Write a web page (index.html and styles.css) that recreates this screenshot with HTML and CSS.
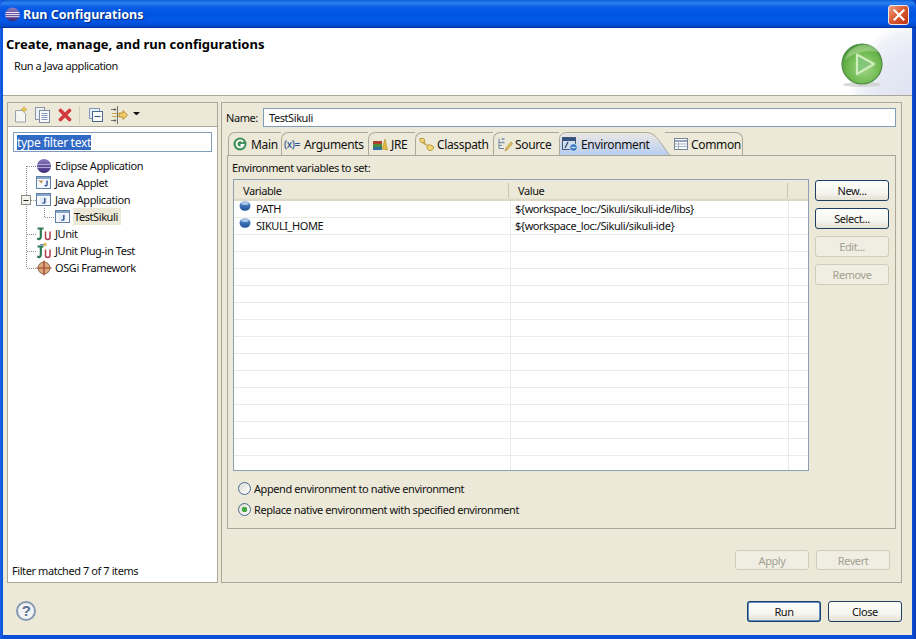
FILE: index.html
```html
<!DOCTYPE html>
<html lang="en">
<head>
<meta charset="utf-8">
<title>Run Configurations</title>
<link rel="stylesheet" href="styles.css">
</head>
<body>
<svg class="defs" width="0" height="0" aria-hidden="true">
  <defs>
    <linearGradient id="eclipse" x1="0" y1="0" x2="0" y2="1"><stop offset="0" stop-color="#8d7cc0"/><stop offset="1" stop-color="#3c2a78"/></linearGradient>
    <radialGradient id="ball" cx=".55" cy=".6" r=".7"><stop offset="0" stop-color="#a4d88c"/><stop offset=".6" stop-color="#6cb84c"/><stop offset="1" stop-color="#3f8a34"/></radialGradient>
    <linearGradient id="blueball" x1="0" y1="0" x2="0" y2="1"><stop offset="0" stop-color="#8fb2e0"/><stop offset=".45" stop-color="#3f74b8"/><stop offset="1" stop-color="#1e4f98"/></linearGradient>
    <linearGradient id="envtab" x1="0" y1="0" x2="0" y2="1"><stop offset="0" stop-color="#ece9e4"/><stop offset="1" stop-color="#b6ccf0"/></linearGradient>
    <symbol id="jfile" viewBox="0 0 16 16">
      <rect x=".5" y="1.500" width="14" height="12" fill="#f4f7fb" stroke="#5f7fa4"/>
      <rect x="1" y="2" width="13" height="2" fill="#86a5c9"/>
      <rect x="4" y="5" width="7" height="7" fill="#e2ebf6"/>
      <path d="M8.800 6v4.200c0 1-1.600 1.200-2.400.6" fill="none" stroke="#2a4f94" stroke-width="1.400"/>
    </symbol>
    <symbol id="ju" viewBox="0 0 16 14">
      <path d="M1.500 1.500h6M4.800 1.500v8.500c0 2-1.800 2.500-3.600 1.600" fill="none" stroke="#2f7a54" stroke-width="2.200"/>
      <path d="M9.500 4.500v6c0 2.500 4.500 2.500 4.500 0v-6" fill="none" stroke="#b04050" stroke-width="1.500"/>
    </symbol>
    <symbol id="var" viewBox="0 0 12 10">
      <ellipse cx="6" cy="5" rx="5.500" ry="4.800" fill="url(#blueball)"/>
      <ellipse cx="6" cy="2.600" rx="3.400" ry="1.500" fill="#c5d8f0" opacity=".75"/>
    </symbol>
  </defs>
</svg>

<div class="window">
  <header class="titlebar">
    <svg class="title-icon" width="15" height="15" viewBox="0 0 15 15">
      <circle cx="7.500" cy="7.500" r="7" fill="url(#eclipse)"/>
      <path d="M.5 5.500h14M.2 7.600h14.600M.5 9.700h14" stroke="#e8e0f4" stroke-width="1"/>
    </svg>
    <span class="title-text">Run Configurations</span>
    <button class="close-x" aria-label="Close">
      <svg width="12" height="12" viewBox="0 0 12 12"><path d="M1.500 1.500l9 9M10.500 1.500l-9 9" stroke="#fff" stroke-width="2.200" stroke-linecap="square"/></svg>
    </button>
  </header>

  <div class="client">
    <section class="banner">
      <div class="banner-text">
        <h1>Create, manage, and run configurations</h1>
        <p>Run a Java application</p>
      </div>
      <svg class="banner-icon" width="44" height="46" viewBox="0 0 44 46">
        <ellipse cx="22" cy="42.500" rx="19" ry="2.500" fill="#c8ccc4" opacity=".7"/>
        <circle cx="22" cy="22" r="20" fill="url(#ball)" stroke="#4f8a48" stroke-width="1.200"/>
        <path d="M5 18C8 7 17 3 25 3c7 0 11 3 13 7C28 8 14 10 5 18z" fill="#d4eec4" opacity=".4"/>
        <path d="M17 12.500l17 9.500-17 10z" fill="#7cc27a" fill-opacity=".7" stroke="#cfeebc" stroke-width="2.200" stroke-linejoin="round"/>
      </svg>
    </section>

    <main class="workspace">
      <aside class="left-panel">
        <div class="left-toolbar">
          <svg class="tb-new" width="14" height="17" viewBox="0 0 14 17">
            <path d="M1.500 4.500h7l3 3v8.500h-10z" fill="#f6f6f2" stroke="#9aa3ae"/>
            <path d="M10 .5l.9 2.100 2.100.9-2.100.9-.9 2.100-.9-2.100-2.100-.9 2.100-.9z" fill="#f2c94e" stroke="#b9902c" stroke-width=".5"/>
          </svg>
          <svg class="tb-dup" width="15" height="16" viewBox="0 0 15 16">
            <rect x=".5" y=".5" width="9" height="12" fill="#eef1f6" stroke="#8a96a8"/>
            <rect x="4.500" y="3.500" width="10" height="12" fill="#f8f9fb" stroke="#7d8ba0"/>
            <path d="M6.500 6.500h6M6.500 8.500h6M6.500 10.500h6M6.500 12.500h6" stroke="#8497b4"/>
          </svg>
          <svg class="tb-del" width="14" height="14" viewBox="0 0 14 14">
            <path d="M2.500 2.500l9 9M11.500 2.500l-9 9" stroke="#d33a3f" stroke-width="3.600" stroke-linecap="round"/>
          </svg>
          <span class="tb-sep"></span>
          <svg class="tb-collapse" width="14" height="14" viewBox="0 0 14 14">
            <rect x=".5" y=".5" width="10" height="10" fill="#e8eef6" stroke="#7f97b8"/>
            <rect x="3.500" y="3.500" width="10" height="10" fill="#f7f9fc" stroke="#49678f"/>
            <path d="M5.500 8.500h6" stroke="#2f4f7c"/>
          </svg>
          <svg class="tb-filter" width="17" height="18" viewBox="0 0 17 18">
            <path d="M0 3.500h5M0 14.500h5M6.500 0v18" stroke="#6f6f6f"/>
            <path d="M3.500 2l2 1.500-2 1.500zM3.500 13l2 1.500-2 1.500z" fill="#555"/>
            <path d="M8 7h4V4.500L16.500 9 12 13.500V11H8z" fill="#f3cc6a" stroke="#b8902e"/>
            <path d="M1 7.500h5M1 10.500h5" stroke="#c9a54a"/>
          </svg>
          <span class="tb-drop"></span>
        </div>
        <div class="filter-wrap">
          <div class="filter-input"><span class="filter-sel">type filter text</span></div>
        </div>
        <div class="tree">
          <svg class="tree-lines" width="60" height="120" viewBox="0 0 60 120">
            <path d="M18.500 6v102M19 6.500h10M23 40.500h6M19 74.500h10M19 91.500h10M19 108.500h10M36.500 48v9M37 57.500h11" fill="none" stroke="#8f8f8f" stroke-dasharray="1 1"/>
            <rect x="13.500" y="35.500" width="9" height="9" fill="#f3f2ec" stroke="#8a8a80"/>
            <path d="M15.500 40.500h5" stroke="#222"/>
          </svg>
          <div class="node">
            <svg class="node-icon" width="16" height="16" viewBox="0 0 16 16"><circle cx="8" cy="8" r="7" fill="url(#eclipse)"/><path d="M1 6.500h14M1 9.500h14" stroke="#b4a8d8"/></svg>
            <span>Eclipse Application</span>
          </div>
          <div class="node">
            <svg class="node-icon" width="16" height="16" viewBox="0 0 16 16"><rect x=".5" y="1.500" width="14" height="12" fill="#f4f7fb" stroke="#5f7fa4"/><rect x="1" y="2" width="13" height="2" fill="#86a5c9"/><path d="M2 5c2 1 3 1 5 0l-1.500 3.500L4 7z" fill="#b78a3c"/><path d="M11 5.500v4.300c0 1-1.600 1.200-2.400.6" fill="none" stroke="#2a4f94" stroke-width="1.400"/></svg>
            <span>Java Applet</span>
          </div>
          <div class="node">
            <svg class="node-icon" width="16" height="16"><use href="#jfile"/></svg>
            <span>Java Application</span>
          </div>
          <div class="node node-child">
            <svg class="node-icon" width="16" height="16"><use href="#jfile"/></svg>
            <span class="node-selected">TestSikuli</span>
          </div>
          <div class="node">
            <svg class="node-icon" width="16" height="14"><use href="#ju"/></svg>
            <span>JUnit</span>
          </div>
          <div class="node">
            <svg class="node-icon" width="16" height="17" viewBox="0 0 16 17">
              <path d="M4 2.500h4" stroke="#5f86c4"/><path d="M9 .8l2 1.700-2 1.700-2-1.700z" fill="#e6c860" stroke="#ad9440" stroke-width=".5"/>
              <g transform="translate(0 3)"><use href="#ju" width="16" height="14"/></g>
            </svg>
            <span>JUnit Plug-in Test</span>
          </div>
          <div class="node">
            <svg class="node-icon" width="16" height="16" viewBox="0 0 16 16"><circle cx="8" cy="8" r="6" fill="#d9a878" stroke="#8a6a50"/><path d="M8 .5v15M.5 8h15" stroke="#a04030" stroke-width="1.200"/></svg>
            <span>OSGi Framework</span>
          </div>
        </div>
        <div class="left-status">Filter matched 7 of 7 items</div>
      </aside>

      <section class="right-panel">
        <div class="name-row">
          <label class="name-label">Name:</label>
          <div class="name-input">TestSikuli</div>
        </div>

        <div class="tabs">
          <div class="tab tab-main">
            <svg width="14" height="14" viewBox="0 0 14 14"><circle cx="7" cy="7" r="6.500" fill="#3f8f58"/><path d="M10 5a3.500 3.500 0 1 0 .4 3H7.500" fill="none" stroke="#fff" stroke-width="1.800"/></svg>
            <span>Main</span>
          </div>
          <div class="tab tab-args">
            <span class="args-icon">(x)=</span>
            <span>Arguments</span>
          </div>
          <div class="tab tab-jre">
            <svg width="16" height="14" viewBox="0 0 16 14"><path d="M1 10h9v3H1z" fill="#2d6f9f"/><path d="M1 7h9v3H1z" fill="#4c8c3c"/><path d="M1 4h9v3H1z" fill="#b04030"/><path d="M10 12l3-10 2.500 11z" fill="#e3b93c" stroke="#a88620" stroke-width=".5"/></svg>
            <span>JRE</span>
          </div>
          <div class="tab tab-cp">
            <svg width="16" height="15" viewBox="0 0 16 15"><path d="M1 1.500h3.500l1 1.500v2.500L3 6 1 4z" fill="#f2d878" stroke="#b89a3a"/><path d="M4 5l3 3" stroke="#b89a3a" stroke-width="1.500"/><path d="M8 8h3.500l3 1.500v2l-2.500 2h-2L8 11z" fill="#f2d878" stroke="#b89a3a"/></svg>
            <span>Classpath</span>
          </div>
          <div class="tab tab-src">
            <svg width="16" height="15" viewBox="0 0 16 15"><path d="M2 1.500v10h5M2 5.500h3M2 8.500h3" fill="none" stroke="#6a87a8"/><rect x="4.500" y="1" width="3" height="2" fill="#8ea7c4"/><rect x="5" y="4.500" width="2.500" height="2" fill="#8ea7c4"/><path d="M8 14l1-3 5-6 1.500 1.500-5 6z" fill="#e4c260" stroke="#9c8030" stroke-width=".6"/></svg>
            <span>Source</span>
          </div>
          <div class="tab-env">
            <svg class="env-shape" width="113" height="24" viewBox="0 0 113 24">
              <path d="M.5 24V7C.5 3 3.500.5 8 .5h78c6 0 10 2 14 8l6 8c3 5 5 7 7 7.500z" fill="url(#envtab)"/>
              <path d="M.5 23V7C.5 3 3.500.5 8 .5h78c6 0 10 2 14 8l6 8c3 5 5 7 7 7.500" fill="none" stroke="#aca899"/>
            </svg>
            <svg class="env-icon" width="16" height="15" viewBox="0 0 16 15"><rect x=".5" y=".5" width="13" height="12" fill="#d4dfee" stroke="#44587a"/><rect x="1" y="1" width="12" height="3" fill="#34507c"/><path d="M3 11l3-6" stroke="#34507c" stroke-width="1.400"/><circle cx="11.500" cy="10.500" r="3.800" fill="#3f7cc4" stroke="#f0f4fa" stroke-width=".7"/><path d="M9.500 10.500h4" stroke="#e6eef8"/></svg>
            <span class="env-label">Environment</span>
          </div>
          <div class="tab tab-common">
            <svg width="14" height="12" viewBox="0 0 14 12"><rect x=".5" y=".5" width="13" height="11" fill="#fbfcfe" stroke="#76849a"/><path d="M1 3h12" stroke="#94a4bc" stroke-width="2"/><path d="M1 6h12M1 8.500h12M4.500 3v8" stroke="#a8b4c6"/></svg>
            <span>Common</span>
          </div>
        </div>

        <div class="tab-body">
          <div class="env-caption">Environment variables to set:</div>
          <div class="env-main">
            <div class="table">
              <div class="thead">
                <div class="th th-var">Variable</div>
                <div class="th th-val">Value</div>
                <div class="th th-end"></div>
              </div>
              <div class="tbody">
                <div class="row">
                  <div class="cell cell-var"><svg class="var-icon" width="12" height="10"><use href="#var"/></svg>PATH</div>
                  <div class="cell cell-val">${workspace_loc:/Sikuli/sikuli-ide/libs}</div>
                  <div class="cell cell-end"></div>
                </div>
                <div class="row">
                  <div class="cell cell-var"><svg class="var-icon" width="12" height="10"><use href="#var"/></svg>SIKULI_HOME</div>
                  <div class="cell cell-val">${workspace_loc:/Sikuli/sikuli-ide}</div>
                  <div class="cell cell-end"></div>
                </div>
                <div class="row"><div class="cell cell-var"></div><div class="cell cell-val"></div><div class="cell cell-end"></div></div>
                <div class="row"><div class="cell cell-var"></div><div class="cell cell-val"></div><div class="cell cell-end"></div></div>
                <div class="row"><div class="cell cell-var"></div><div class="cell cell-val"></div><div class="cell cell-end"></div></div>
                <div class="row"><div class="cell cell-var"></div><div class="cell cell-val"></div><div class="cell cell-end"></div></div>
                <div class="row"><div class="cell cell-var"></div><div class="cell cell-val"></div><div class="cell cell-end"></div></div>
                <div class="row"><div class="cell cell-var"></div><div class="cell cell-val"></div><div class="cell cell-end"></div></div>
                <div class="row"><div class="cell cell-var"></div><div class="cell cell-val"></div><div class="cell cell-end"></div></div>
                <div class="row"><div class="cell cell-var"></div><div class="cell cell-val"></div><div class="cell cell-end"></div></div>
                <div class="row"><div class="cell cell-var"></div><div class="cell cell-val"></div><div class="cell cell-end"></div></div>
                <div class="row"><div class="cell cell-var"></div><div class="cell cell-val"></div><div class="cell cell-end"></div></div>
                <div class="row"><div class="cell cell-var"></div><div class="cell cell-val"></div><div class="cell cell-end"></div></div>
                <div class="row"><div class="cell cell-var"></div><div class="cell cell-val"></div><div class="cell cell-end"></div></div>
                <div class="row"><div class="cell cell-var"></div><div class="cell cell-val"></div><div class="cell cell-end"></div></div>
                <div class="row"><div class="cell cell-var"></div><div class="cell cell-val"></div><div class="cell cell-end"></div></div>
              </div>
            </div>
            <div class="side-buttons">
              <button class="btn">New...</button>
              <button class="btn">Select...</button>
              <button class="btn btn-off">Edit...</button>
              <button class="btn btn-off">Remove</button>
            </div>
          </div>
          <div class="radio-row"><span class="radio"></span><span>Append environment to native environment</span></div>
          <div class="radio-row radio-row-second"><span class="radio radio-on"></span><span>Replace native environment with specified environment</span></div>
        </div>

        <div class="apply-row">
          <button class="btn btn-off">Apply</button>
          <button class="btn btn-off">Revert</button>
        </div>
      </section>
    </main>

    <footer class="footer">
      <div class="help">?</div>
      <div class="footer-buttons">
        <button class="btn btn-default">Run</button>
        <button class="btn">Close</button>
      </div>
    </footer>
  </div>
</div>
</body>
</html>
```

FILE: styles.css
```css
* { box-sizing: border-box; }
html, body { margin: 0; padding: 0; }
body { width: 916px; height: 639px; overflow: hidden; font: 11px "Noto Sans", "Liberation Sans", sans-serif; letter-spacing: -.42px; color: #111; background: #0a4ad0; }
.defs { position: absolute; }
button { font: inherit; letter-spacing: inherit; padding: 0; }

.window { width: 916px; height: 639px; display: flex; flex-direction: column; background: linear-gradient(90deg, #1a62e8 0, #0a4fd8 3px, #0a4fd8 912px, #0a3cb4 916px); padding: 0 4px 4px 3px; }
.titlebar { flex: none; height: 28px; margin: 0 -4px 0 -3px; padding: 0 7px 0 5px; display: flex; align-items: center; gap: 3px; background: linear-gradient(#0d5fd8 0, #2d82f0 3px, #0a5ce6 7px, #0054e0 14px, #0358e8 21px, #0448cc 26px, #00309c 28px); border-radius: 7px 7px 0 0; }
.title-icon { flex: none; }
.title-text { font: bold 12.5px "Noto Sans", sans-serif; letter-spacing: 0; color: #fff; text-shadow: 1px 1px 1px #0a2a80; }
.close-x { margin-left: auto; width: 21px; height: 20px; margin-top: 1px; border: 1px solid #f0e8e4; border-radius: 3px; background: linear-gradient(135deg, #eda488 0, #dc5c34 45%, #bc3410 100%); display: flex; align-items: center; justify-content: center; }

.client { flex: 1; display: flex; flex-direction: column; background: #ece9d8; min-height: 0; }
.banner { flex: none; height: 68px; padding: 8px 28px 0 3px; display: flex; justify-content: space-between; background: radial-gradient(ellipse 62px 72px at 100% 100%, #dfe3f1 0, #e6e9f5 55%, #f0f2f9 85%, #fff 100%), #fff; border-bottom: 1px solid #aca899; }
.banner h1 { margin: 0; font: bold 13px "Noto Sans", sans-serif; letter-spacing: 0; color: #000; line-height: 16px; }
.banner p { margin: 6px 0 0 8px; line-height: 16px; }
.banner-icon { margin-top: 6px; }

.workspace { flex: 1; min-height: 0; display: flex; gap: 3px; padding: 6px 10px 0 4px; height: 487px; }
.left-panel { width: 211px; display: flex; flex-direction: column; border: 1px solid #aca899; background: #fff; }
.left-toolbar { height: 24px; flex: none; background: #ece9d8; border-bottom: 1px solid #aca899; display: flex; align-items: center; padding-left: 6px; }
.tb-new { margin-top: -1px; }
.tb-dup { margin-left: 7px; }
.tb-del { margin-left: 8px; }
.tb-sep { width: 1px; height: 18px; margin-left: 7px; background: #d4d0c0; }
.tb-collapse { margin-left: 9px; }
.tb-filter { margin-left: 8px; }
.tb-drop { margin-left: 5px; margin-top: -2px; border: 3px solid transparent; border-top: 3px solid #111; border-bottom: 0; width: 7px; border-left-width: 3.5px; border-right-width: 3.5px; }
.filter-wrap { flex: none; padding: 5px 5px 0 5px; }
.filter-input { height: 20px; border: 1px solid #7f9db9; background: #fff; padding: 2px 0 0 3px; line-height: 15px; }
.filter-sel { display: inline-block; background: #316ac5; color: #fff; height: 15px; font-size: 12px; letter-spacing: -.3px; }

.tree { position: relative; flex: 1; padding-top: 5px; padding-left: 28px; min-height: 0; }
.tree-lines { position: absolute; left: 0; top: 8px; }
.node { position: relative; height: 17px; display: flex; align-items: center; gap: 3px; }
.node-child { padding-left: 19px; gap: 2px; }
.node-icon { flex: none; }
.node-selected { background: #ece9d8; padding: 0 3px 0 1px; height: 17px; line-height: 17px; }
.left-status { flex: none; padding: 0 0 4px 4px; line-height: 15px; }

.right-panel { flex: 1; display: flex; flex-direction: column; border: 1px solid #aca899; padding: 5px 5px 11px 5px; }
.name-row { flex: none; display: flex; align-items: center; height: 19px; margin-left: -1px; }
.name-label { width: 37px; flex: none; }
.name-input { flex: 1; height: 19px; border: 1px solid #7f9db9; background: #fff; padding-left: 5px; line-height: 17px; }

.tabs { flex: none; display: flex; height: 23px; margin-top: 5px; font-size: 12px; letter-spacing: -.35px; align-items: stretch; }
.tab { display: flex; align-items: center; gap: 4px; border-top: 1px solid #aca899; border-left: 1px solid #aca899; border-radius: 7px 0 0 0; padding-left: 4px; }
.tab svg { flex: none; }
.tab-main { width: 53px; margin-left: 1px; gap: 4px; }
.tab-args { width: 87px; padding-left: 2px; gap: 2px; }
.args-icon { font-size: 10px; font-weight: 500; color: #2a4f90; width: 18px; white-space: nowrap; flex: none; }
.tab-jre { width: 47px; padding-left: 3px; gap: 3px; }
.tab-cp { width: 78px; padding-left: 3px; gap: 2px; }
.tab-src { width: 66px; padding-left: 3px; gap: 2px; }
.tab-env { position: relative; width: 106px; display: flex; align-items: center; gap: 3px; padding: 1px 0 0 3px; }
.env-shape { position: absolute; left: 0; top: 0; }
.env-icon, .env-label { position: relative; flex: none; }
.tab-common { width: 78px; border-left: 0; border-right: 1px solid #aca899; border-radius: 0 7px 0 0; padding-left: 9px; gap: 3px; }

.tab-body { flex: none; height: 374px; border: 1px solid #aca899; background: #ece9d8; padding: 4px 6px 0 5px; position: relative; }
.env-caption { line-height: 15px; height: 19px; margin-left: -1px; }
.env-main { display: flex; gap: 6px; height: 292px; }
.table { width: 576px; height: 292px; border: 1px solid #8d9fb4; background: #fff; overflow: hidden; flex: none; }
.thead { display: flex; height: 21px; background: #ece9d8; border-bottom: 2px solid #dcd9c6; box-shadow: inset 0 -1px 0 #e6e3d3; }
.th { padding-left: 9px; border-right: 1px solid #c8c5b2; margin: 3px 0; height: 15px; line-height: 15px; }
.th-var { width: 275px; }
.th-val { width: 279px; }
.th-end { flex: 1; border-right: 0; }
.tbody { height: 270px; overflow: hidden; }
.row { display: flex; height: 17px; border-bottom: 1px solid #ebebe6; }
.cell { border-right: 1px solid #ebebe6; line-height: 16px; white-space: nowrap; }
.cell-var { width: 277px; padding-left: 5px; display: flex; align-items: center; }
.cell-val { width: 278px; padding-left: 4px; }
.cell-end { flex: 1; border-right: 0; }
.var-icon { flex: none; margin: -6px 5px 0 0; }

.side-buttons { display: flex; flex-direction: column; gap: 7px; padding-top: 1px; }
.side-buttons .btn { height: 21px; }
.btn { width: 74px; height: 20px; border: 1px solid #1e3f62; border-radius: 3px; background: linear-gradient(#fdfdfb 0, #f6f6f0 60%, #e4e1d4 100%); color: #111; text-align: center; line-height: 17px; display: block; }
.btn-off { border-color: #cfccba; color: #a3a192; background: #f0eee2; }
.btn-default { border: 2px solid #5f8fd0; outline: 1px solid #1e3f62; outline-offset: -1px; line-height: 15px; }

.radio-row { display: flex; align-items: center; gap: 3px; height: 15px; margin-top: 10px; padding-left: 5px; }
.radio-row-second { margin-top: 6px; }
.radio { width: 13px; height: 13px; border-radius: 50%; border: 1px solid #4a6a8c; background: linear-gradient(135deg, #dcdcd4, #fff); flex: none; }
.radio-on { background: radial-gradient(circle, #3fa83f 0 2.5px, transparent 3px), linear-gradient(135deg, #dcdcd4, #fff); }

.apply-row { flex: none; display: flex; justify-content: flex-end; gap: 7px; margin-top: 21px; padding-right: 6px; }

.footer { flex: none; height: 52px; display: flex; justify-content: space-between; align-items: flex-start; padding: 18px 10px 0 13px; }
.help { width: 20px; height: 20px; border: 2px solid #8599b3; border-radius: 50%; background: #f2f3f4; color: #5a7090; font: bold 15px/16px "Liberation Sans", sans-serif; text-align: center; }
.footer-buttons { display: flex; gap: 7px; }
.footer-buttons .btn { height: 21px; }
```
